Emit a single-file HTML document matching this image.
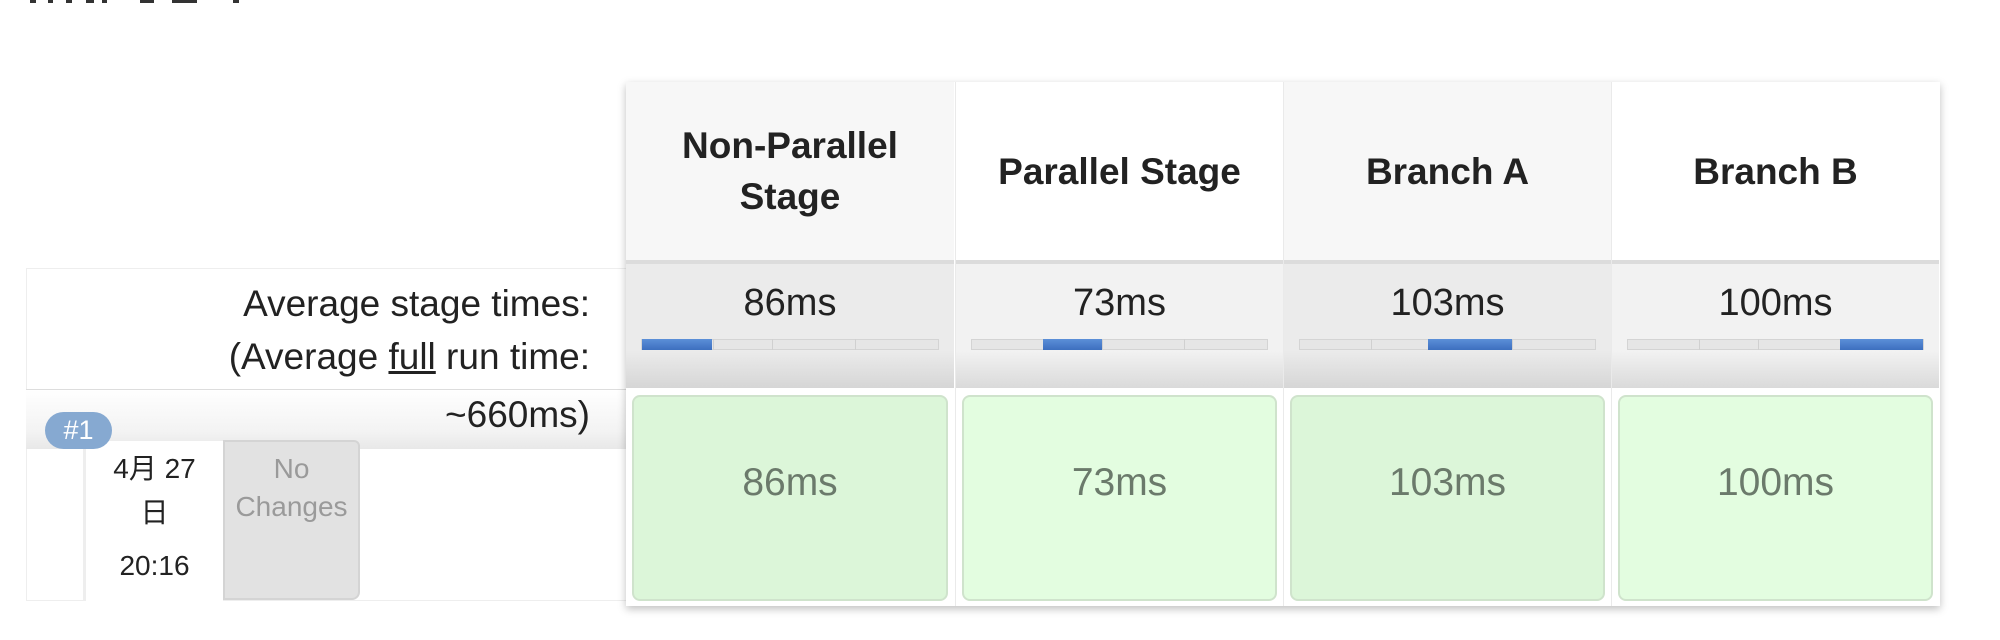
<!DOCTYPE html>
<html><head><meta charset="utf-8"><style>
*{margin:0;padding:0;box-sizing:border-box}
body{width:2000px;height:640px;background:#fff;position:relative;overflow:hidden;font-family:"Liberation Sans","Noto Sans CJK SC",sans-serif;color:#222}
.a{position:absolute}
.tbl{left:626px;top:82px;width:1314px;height:524px;box-shadow:0 3px 8px rgba(0,0,0,.25);background:#fff}
.col{position:absolute;top:0;width:328px;height:524px;border-left:1px solid #eaeaea}
.hd{position:absolute;top:0;left:0;right:0;height:178px;display:flex;align-items:center;justify-content:center;text-align:center;font-weight:bold;font-size:37px;line-height:51px;color:#222}
.av{position:absolute;top:178px;left:0;right:0;height:128px;border-top:4px solid #dcdcdc;background:linear-gradient(#f2f2f2 0,#f2f2f2 70%,#dadada 100%);text-align:center;font-size:38px;}
.av span{position:absolute;top:18px;left:0;right:0}
.bar{position:absolute;top:75px;left:15px;right:15px;height:11px;background:#e6e6e6;border:1px solid #d4d4d4}
.bar i{position:absolute;top:-1px;bottom:-1px;width:1px;background:#d0d0d0}
.bar b{position:absolute;top:-1px;bottom:-1px;background:linear-gradient(#5b8fd8,#3d6fbf)}
.bd{position:absolute;top:313px;left:6px;right:6px;height:206px;border:2px solid #cfe3cc;border-radius:8px;background:#e3fde0;display:flex;align-items:center;justify-content:center;font-size:39px;color:#6b7a6b;padding-bottom:30px}
.dk .hd{background:#f7f7f7}.dk .av{background:linear-gradient(#ebebeb 0,#ebebeb 70%,#d6d6d6 100%)}.dk .bd{background:#dcf6d9}
.lt{font-size:37px;text-align:right;right:1410px}
.m{position:absolute;top:0;height:3px;background:#333}
</style></head><body>
<div class="m" style="left:30px;width:6px"></div><div class="m" style="left:48px;width:5px"></div><div class="m" style="left:66px;width:6px"></div><div class="m" style="left:86px;width:8px"></div><div class="m" style="left:102px;width:5px"></div><div class="m" style="left:140px;width:14px"></div><div class="m" style="left:172px;width:25px"></div><div class="m" style="left:233px;width:6px"></div>
<div class="a" style="left:26px;top:268px;width:600px;height:333px;border:1px solid #eee;border-right:none"></div>
<div class="a" style="left:26px;top:389px;width:600px;height:60px;border-top:1px solid #ddd;background:linear-gradient(#fff,#f3f3f3 70%,#e8e8e8)"></div>
<div class="a lt" style="top:283px">Average stage times:</div>
<div class="a lt" style="top:336px">(Average <u>full</u> run time:</div>
<div class="a lt" style="top:394px">~660ms)</div>
<div class="a" style="left:83px;top:441px;width:140px;height:160px;background:#fff;border-left:3px solid #eee;text-align:center;font-size:28px;line-height:44px;padding-top:6px">4月 27<br>日<br><span style="line-height:62px">20:16</span></div>
<div class="a" style="left:223px;top:440px;width:137px;height:160px;background:#e2e2e2;border:2px solid #d4d4d4;border-radius:0 6px 8px 0;text-align:center;font-size:28px;color:#9a9a9a;line-height:38px;padding-top:8px">No<br>Changes</div>
<div class="a" style="left:45px;top:412px;width:67px;height:37px;border-radius:19px;background:#86a9d1;color:#fff;font-size:27px;text-align:center;line-height:37px">#1</div>
<div class="a tbl">
 <div class="col dk" style="left:0;border-left:none"><div class="hd">Non-Parallel<br>Stage</div><div class="av"><span>86ms</span><div class="bar"><i style="left:24%"></i><i style="left:44%"></i><i style="left:72%"></i><b style="left:0;width:23.5%"></b></div></div><div class="bd">86ms</div></div>
 <div class="col" style="left:329px"><div class="hd">Parallel Stage</div><div class="av"><span>73ms</span><div class="bar"><i style="left:24%"></i><i style="left:44%"></i><i style="left:72%"></i><b style="left:24%;width:20%"></b></div></div><div class="bd">73ms</div></div>
 <div class="col dk" style="left:657px"><div class="hd">Branch A</div><div class="av"><span>103ms</span><div class="bar"><i style="left:24%"></i><i style="left:44%"></i><i style="left:72%"></i><b style="left:43.5%;width:28.5%"></b></div></div><div class="bd">103ms</div></div>
 <div class="col" style="left:985px"><div class="hd">Branch B</div><div class="av"><span>100ms</span><div class="bar"><i style="left:24%"></i><i style="left:44%"></i><i style="left:72%"></i><b style="left:72%;width:28%"></b></div></div><div class="bd">100ms</div></div>
</div>
</body></html>
